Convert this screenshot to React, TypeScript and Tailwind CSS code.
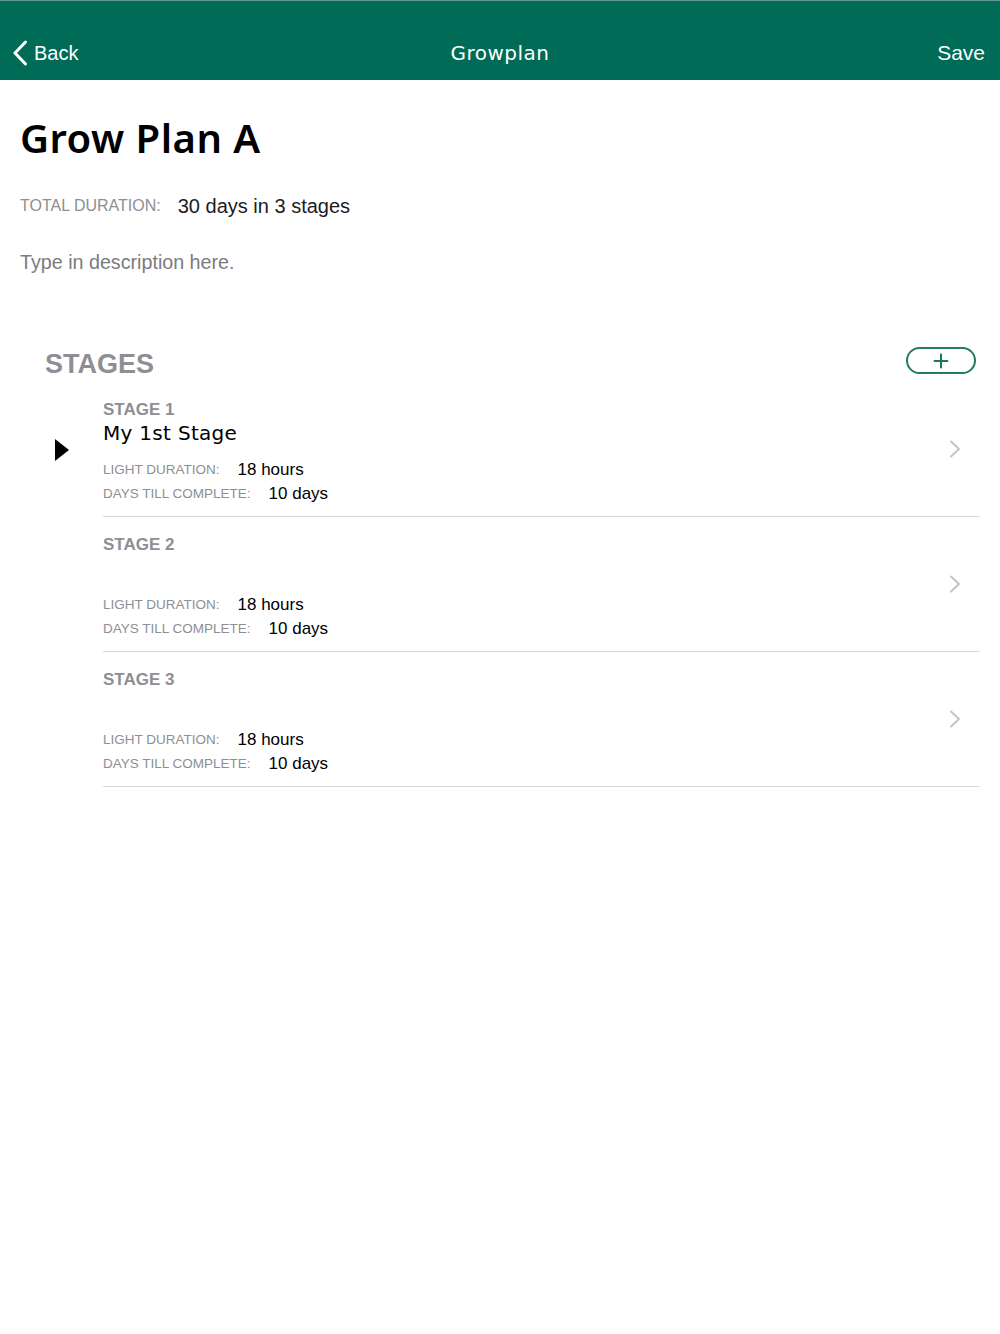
import { Plus } from "lucide-react";

const STAGES = [
  { n: 1, name: "My 1st Stage", hours: "18 hours", days: "10 days", active: true },
  { n: 2, name: "", hours: "18 hours", days: "10 days", active: false },
  { n: 3, name: "", hours: "18 hours", days: "10 days", active: false },
];

const display = "font-['DejaVu_Sans',sans-serif]";
const body = "font-['Liberation_Sans',Arial,sans-serif]";

export default function App() {
  return (
    <div className={`min-h-[1334px] w-[1000px] bg-white ${body}`}>
      <header className="flex h-[80px] items-start border-t border-[#5f9c8d] bg-[#006b56] px-[12px] pt-[37px] text-white">
        <button className="flex w-[200px] items-center gap-[6px] text-[20px] leading-[30px]">
          <svg viewBox="0 0 16 26" className="h-[26px] w-[16px]" aria-hidden>
            <path d="M13.5 2 L3 13 L13.5 24" fill="none" stroke="white" strokeWidth="3" strokeLinecap="round" strokeLinejoin="round" />
          </svg>
          <span>Back</span>
        </button>
        <div className={`flex-1 text-center text-[20px] leading-[30px] tracking-[0.5px] ${display}`}>
          Growplan
        </div>
        <div className="w-[200px] pr-[3px] text-right text-[21px] leading-[30px]">Save</div>
      </header>

      <main>
        <section className="px-[20px]">
          <h1 className="pt-[32px] font-['Noto_Sans',sans-serif] text-[40px] font-semibold leading-[52px] tracking-[0.5px] text-black">
            Grow Plan A
          </h1>
          <div className="mt-[28px] flex items-center gap-[17px] leading-[28px]">
            <span className="text-[16px] text-[#8e8e93]">TOTAL DURATION:</span>
            <span className="text-[20px] text-[#1c1c1e]">30 days in 3 stages</span>
          </div>
          <p className="mt-[28px] text-[19.7px] leading-[28px] text-[#7c7c80]">Type in description here.</p>
        </section>

        <section className="mt-[71px]">
          <div className="flex items-start justify-between pl-[45px] pr-[24px]">
            <h2 className="text-[27px] font-bold leading-[34px] text-[#8e8e93]">STAGES</h2>
            <button
              aria-label="Add stage"
              className="grid h-[27px] w-[70px] place-items-center rounded-full border-2 border-[#237a66] text-[#1b7560]"
            >
              <Plus className="size-[22px]" strokeWidth={2.2} />
            </button>
          </div>

          <ul className="mt-[1px]">
            {STAGES.map((s) => (
              <li key={s.n} className="flex">
                <div className="flex w-[103px] shrink-0 items-center pl-[55px]">
                  {s.active && (
                    <svg viewBox="0 0 14 22" className="h-[22px] w-[14px]" aria-hidden>
                      <path d="M0 0 L14 11 L0 22 Z" fill="black" />
                    </svg>
                  )}
                </div>
                <div className="mr-[20px] flex flex-1 items-center border-b border-[#d9d9dc] pb-[10px] pt-[18px]">
                  <div className="flex-1">
                    <div className="text-[17px] font-bold leading-[20px] text-[#8e8e93]">STAGE {s.n}</div>
                    <div className={`h-[26px] text-[20px] leading-[26px] tracking-[0.3px] text-black ${display}`}>
                      {s.name}
                    </div>
                    <div className="mt-[12px] flex items-center gap-[18px] leading-[24px]">
                      <span className="text-[13.5px] text-[#8e8e93]">LIGHT DURATION:</span>
                      <span className="text-[17px] text-black">{s.hours}</span>
                    </div>
                    <div className="flex items-center gap-[18px] leading-[24px]">
                      <span className="text-[13.5px] text-[#8e8e93]">DAYS TILL COMPLETE:</span>
                      <span className="text-[17px] text-black">{s.days}</span>
                    </div>
                  </div>
                  <svg viewBox="0 0 12 18" className="mb-[8px] mr-[19px] h-[18px] w-[12px]" aria-hidden>
                    <path d="M2 1.5 L10 9 L2 16.5" fill="none" stroke="#c4c4c8" strokeWidth="2" strokeLinecap="round" strokeLinejoin="round" />
                  </svg>
                </div>
              </li>
            ))}
          </ul>
        </section>
      </main>
    </div>
  );
}
